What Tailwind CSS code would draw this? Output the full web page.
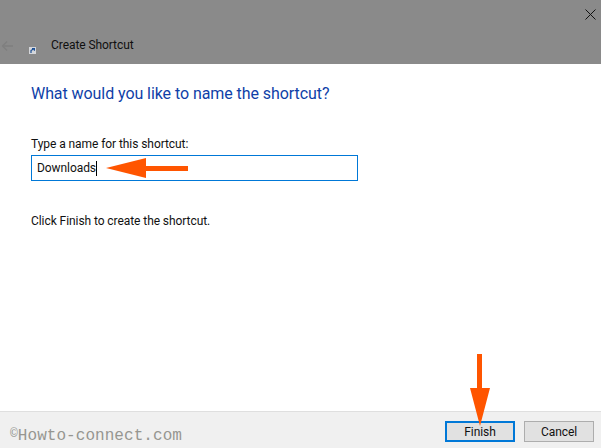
<!DOCTYPE html>
<html lang="en">
<head>
  <meta charset="utf-8">
  <meta name="viewport" content="width=device-width, initial-scale=1.0">
  <script src="https://cdn.jsdelivr.net/npm/@tailwindcss/browser@4"></script>
</head>
<body class="bg-white overflow-hidden">
  <div class="relative w-[601px] h-[448px] flex flex-col font-['Roboto',sans-serif] text-[12px] tracking-[-0.07px] text-[#111]">

    <!-- Title bar (dimmed) -->
    <div class="h-[64px] bg-[#8a8a8a] relative flex items-end pb-[11px] shrink-0">
      <svg class="ml-[1px] mb-[1px]" width="13" height="12" viewBox="0 0 13 12" fill="none" stroke="#7f7f7f" stroke-width="1.3"><path d="M12 6H1.5M6 1.5 1.5 6 6 10.5"/></svg>
      <svg class="ml-[15px] mb-[-1px]" width="7" height="7" viewBox="0 0 7 7"><rect width="7" height="7" fill="#d4d6da"/><path d="M2 6V3.500L4.500 2M3 1.600h2.400v2.200" fill="none" stroke="#1c4f94" stroke-width="1.2"/></svg>
      <span class="ml-[15px] leading-[16px] text-[#101010]">Create Shortcut</span>
      <svg class="absolute left-[585px] top-[9px]" width="11" height="11" viewBox="0 0 11 11" stroke="#111" stroke-width="1"><path d="M.5.5l10 10M10.500.5l-10 10"/></svg>
    </div>

    <!-- Wizard body -->
    <div class="flex-1 pl-[31px] pt-[19px]">
      <h1 class="text-[16px] leading-[22px] font-normal text-[#0f3fa8]">What would you like to name the shortcut?</h1>
      <label class="block mt-[31px] leading-[16px]">Type a name for this shortcut:</label>
      <div class="mt-[3px] w-[327px] h-[26px] border border-[#0078d7] pl-[5px] flex items-center">
        <span class="leading-[16px]">Downloads</span>
        <span class="w-px h-[15px] bg-black"></span>
      </div>
      <p class="mt-[32px] leading-[16px]">Click Finish to create the shortcut.</p>
    </div>

    <!-- Button bar -->
    <div class="h-[37px] shrink-0 bg-[#f0f0f0] border-t border-[#dfdfdf] relative flex items-center justify-end gap-[9px] pr-[7px] pt-[3px]">
      <span class="absolute left-[10px] top-[14px] font-['Liberation_Mono',monospace] text-[16px] leading-[20px] tracking-[0.05px] text-[#969691]"><span class="relative top-[-3px] text-[13px]">©</span>Howto-connect.com</span>
      <button class="w-[70px] h-[21px] bg-[#e1e1e1] border-2 border-[#0078d7] leading-[16px]">Finish</button>
      <button class="w-[70px] h-[21px] bg-[#e1e1e1] border border-[#adadad] leading-[16px]">Cancel</button>
    </div>

    <!-- Annotation arrows -->
    <svg class="absolute left-0 top-0 pointer-events-none" width="601" height="448" viewBox="0 0 601 448" fill="#ff5500">
      <path d="M106 168 146 158V166H188V171H146V178Z"/>
      <path d="M477 354H482V388H490L480 426 470 388H477Z"/>
    </svg>
  </div>
</body>
</html>
